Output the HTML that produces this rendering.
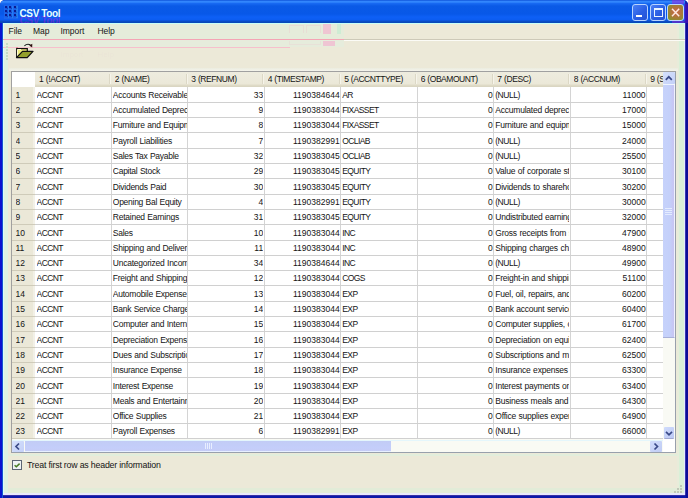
<!DOCTYPE html><html><head><meta charset="utf-8"><style>
*{margin:0;padding:0;box-sizing:border-box}
html,body{width:688px;height:498px;overflow:hidden;background:#ffffff}
body{position:relative;font-family:"Liberation Sans",sans-serif;font-size:8px;color:#141414}
.a{position:absolute}
#win{position:absolute;left:0;top:0;width:688px;height:498px;background:#0a18a8;border-radius:5px 5px 0 0;overflow:hidden}
#title{position:absolute;left:0;top:0;width:688px;height:23px;
 background:linear-gradient(#0a4cd0 0px,#2a7cfa 1px,#3a90ff 2px,#1a6cf4 3px,#0a5ae6 6px,#0858e8 14px,#0e60f6 17px,#0c5cf0 20px,#0a4ec8 21px,#0846b4 23px);}
#ttext{position:absolute;left:19.5px;top:7.6px;line-height:11px;font-weight:bold;font-size:10px;letter-spacing:-0.38px;color:#e8ffff}
#tghost{position:absolute;left:19.5px;top:14.6px;height:8px;overflow:hidden;line-height:11px;font-weight:bold;font-size:10px;letter-spacing:-0.38px;color:rgba(150,30,220,.55)}
#client{position:absolute;left:3px;top:23px;width:682px;height:472px;background:#ece9d8}
.c{position:absolute;overflow:hidden;white-space:nowrap;line-height:15px;height:15px;font-size:8.5px;letter-spacing:-0.2px;word-spacing:0.4px}
</style></head><body>
<div id="win">
<div id="title"></div>
<div class="a" style="left:4px;top:5px;width:14px;height:14px;background:#1c66ee"></div>
<div class="a" style="left:5.0px;top:6.1px;width:2px;height:2px;background:#0a1c90;box-shadow:0 0 1px 0.5px rgba(10,28,144,.5)"></div>
<div class="a" style="left:9.3px;top:6.1px;width:2px;height:2px;background:#0a1c90;box-shadow:0 0 1px 0.5px rgba(10,28,144,.5)"></div>
<div class="a" style="left:13.6px;top:6.1px;width:2px;height:2px;background:#0a1c90;box-shadow:0 0 1px 0.5px rgba(10,28,144,.5)"></div>
<div class="a" style="left:5.0px;top:10.1px;width:2px;height:2px;background:#0a1c90;box-shadow:0 0 1px 0.5px rgba(10,28,144,.5)"></div>
<div class="a" style="left:9.3px;top:10.1px;width:2px;height:2px;background:#0a1c90;box-shadow:0 0 1px 0.5px rgba(10,28,144,.5)"></div>
<div class="a" style="left:13.6px;top:10.1px;width:2px;height:2px;background:#0a1c90;box-shadow:0 0 1px 0.5px rgba(10,28,144,.5)"></div>
<div class="a" style="left:5.0px;top:14.1px;width:2px;height:2px;background:#0a1c90;box-shadow:0 0 1px 0.5px rgba(10,28,144,.5)"></div>
<div class="a" style="left:9.3px;top:14.1px;width:2px;height:2px;background:#0a1c90;box-shadow:0 0 1px 0.5px rgba(10,28,144,.5)"></div>
<div class="a" style="left:13.6px;top:14.1px;width:2px;height:2px;background:#0a1c90;box-shadow:0 0 1px 0.5px rgba(10,28,144,.5)"></div>
<div class="a" style="left:7.5px;top:6px;width:1.5px;height:12px;background:rgba(60,200,255,.25)"></div>
<div class="a" style="left:11.75px;top:6px;width:1.5px;height:12px;background:rgba(60,200,255,.25)"></div>
<div class="a" style="left:16.0px;top:6px;width:1.5px;height:12px;background:rgba(60,200,255,.25)"></div>
<div id="tghost"><div style="margin-top:0px">CSV Tool</div></div>
<div id="ttext">CSV Tool</div>
<div class="a" style="left:632px;top:4px;width:16px;height:17px;border:1px solid #b8d4ff;border-radius:3px;background:linear-gradient(135deg,#4a80f4,#2a5ee4 55%,#2552d4)"><div class="a" style="left:3px;top:10px;width:6px;height:2px;background:#fff"></div></div>
<div class="a" style="left:650px;top:4px;width:16px;height:17px;border:1px solid #b8d4ff;border-radius:3px;background:linear-gradient(135deg,#4a80f4,#2a5ee4 55%,#2552d4)"><div class="a" style="left:2.5px;top:3px;width:9px;height:9px;border:1px solid #e8f4ff;border-top-width:2.5px"></div></div>
<div class="a" style="left:667px;top:4px;width:17px;height:17px;border:1px solid #c0d8ff;border-radius:3px;background:radial-gradient(circle at 55% 45%,#c86a48 0px,#b87040 4px,#a08034 7px,#7a9a30 11px)"><svg width="15" height="15" style="position:absolute;left:0;top:0"><path d="M4 3.8 L11.2 11.2 M11.2 3.8 L4 11.2" stroke="#ffe8e0" stroke-width="1.5"/></svg></div>
<div class="a" style="left:685px;top:0px;width:3px;height:23px;background:linear-gradient(90deg,#1a2ab8,#101098)"></div>
<div class="a" style="left:672px;top:0px;width:12px;height:4px;background:rgba(170,30,220,.45)"></div>
<div class="a" style="left:672px;top:21px;width:12px;height:2px;background:rgba(170,30,220,.45)"></div>
<div class="a" style="left:684px;top:4px;width:4px;height:19px;background:rgba(120,0,200,.35)"></div>
<div id="client"></div>
<div class="a" style="left:0;top:23px;width:2px;height:475px;background:#0812d0"></div>
<div class="a" style="left:2px;top:23px;width:1px;height:475px;background:#1256d0"></div>
<div class="a" style="left:685px;top:23px;width:1px;height:472px;background:#3838b0"></div>
<div class="a" style="left:686px;top:23px;width:2px;height:475px;background:#0c0c98"></div>
<div class="a" style="left:3px;top:495px;width:682px;height:1px;background:#3830a8"></div>
<div class="a" style="left:3px;top:496px;width:683px;height:2px;background:#0a18a8"></div>
<div class="a" style="left:3px;top:23px;width:1px;height:472px;background:#d8fcf8"></div>
<div class="a" style="left:4px;top:24px;width:4px;height:471px;background:#dcf2e2"></div>
<div class="a" style="left:677px;top:23px;width:2px;height:472px;background:#e8ecda"></div>
<div class="a" style="left:679px;top:23px;width:5px;height:472px;background:#daf0d8"></div>
<div class="a" style="left:684px;top:23px;width:1px;height:472px;background:#e4ecfc"></div>
<div class="a" style="left:8px;top:488px;width:675px;height:5px;background:#e2ecd8"></div>
<div class="a" style="left:4px;top:493px;width:681px;height:2px;background:#e8e8fc"></div>
<div class="a" style="left:3px;top:23px;width:682px;height:1px;background:#c8fff8"></div>
<div class="a" style="left:4px;top:24px;width:340px;height:15px;background:#e5ecda"></div>
<div class="a" style="left:4px;top:40px;width:340px;height:7px;background:#e6ecdc"></div>
<div class="a" style="left:8.5px;top:27px;line-height:9px;font-size:8.5px;letter-spacing:-0.05px">File</div>
<div class="a" style="left:33px;top:27px;line-height:9px;font-size:8.5px;letter-spacing:-0.05px">Map</div>
<div class="a" style="left:60.5px;top:27px;line-height:9px;font-size:8.5px;letter-spacing:-0.05px">Import</div>
<div class="a" style="left:97.4px;top:27px;line-height:9px;font-size:8.5px;letter-spacing:-0.05px">Help</div>
<div class="a" style="left:344px;top:39px;width:341px;height:1px;background:#cdc9b8"></div>
<div class="a" style="left:344px;top:40px;width:341px;height:1px;background:#fbfbf6"></div>
<div class="a" style="left:3px;top:39px;width:341px;height:1px;background:#f4a4b4"></div>
<div class="a" style="left:3px;top:47px;width:287px;height:1px;background:#f6c0cc"></div>
<div class="a" style="left:289px;top:25px;width:15px;height:8px;border:1px solid rgba(250,150,190,.15);border-bottom:none"></div>
<div class="a" style="left:306px;top:25px;width:15px;height:8px;border:1px solid rgba(250,150,190,.15);border-bottom:none"></div>
<div class="a" style="left:323px;top:24px;width:8px;height:10px;background:rgba(250,150,200,.45)"></div>
<div class="a" style="left:337px;top:24px;width:4px;height:10px;background:rgba(120,240,190,.2)"></div>
<div class="a" style="left:323px;top:41px;width:12px;height:5px;background:rgba(250,150,200,.45)"></div>
<div class="a" style="left:289px;top:41px;width:32px;height:4px;border:1px solid rgba(250,150,190,.12);border-top:none"></div>
<div class="a" style="left:60.5px;top:50.4px;line-height:9px;color:rgba(235,150,185,.08)">Import</div>
<div class="a" style="left:97.4px;top:50.4px;line-height:9px;color:rgba(235,150,185,.08)">Help</div>
<div class="a" style="left:6px;top:43px;width:2px;height:2px;background:#c4dcc4"></div>
<div class="a" style="left:6px;top:46px;width:2px;height:2px;background:#c4dcc4"></div>
<div class="a" style="left:6px;top:49px;width:2px;height:2px;background:#c4dcc4"></div>
<div class="a" style="left:6px;top:52px;width:2px;height:2px;background:#c4dcc4"></div>
<div class="a" style="left:6px;top:55px;width:2px;height:2px;background:#c4dcc4"></div>
<div class="a" style="left:6px;top:58px;width:2px;height:2px;background:#c4dcc4"></div>
<svg class="a" style="left:12px;top:40px" width="24" height="22" viewBox="0 0 24 22">
<path d="M4.7 17.5 V8.7 H15.3 V11.8" fill="#eeec7c" stroke="#111" stroke-width="1.2"/>
<path d="M5.5 16 V9.5 H9" fill="none" stroke="#fbfbd0" stroke-width="1"/>
<path d="M4.5 17.6 L10.5 11.4 L21 11.4 L15.2 17.6 Z" fill="#94a02c" stroke="#111" stroke-width="1.3" stroke-linejoin="round"/>
<path d="M12.4 5.8 Q15.2 3.2 18.4 4.8" fill="none" stroke="#1a1a1a" stroke-width="1.1"/>
<path d="M17.2 5.6 L20.3 3.8 L20.2 7.6 Z" fill="#301010"/>
<path d="M4 7.5 h2" stroke="#e06070" stroke-width="1" opacity=".5"/>
</svg>
<div class="a" style="left:9px;top:68px;width:669px;height:3px;background:linear-gradient(#ebecdf,#f4f4ec)"></div>
<div class="a" style="left:11px;top:71px;width:665px;height:382px;border:1px solid;border-color:#a0a0a0 #98a0ac #98a0ac #a0a0a0;background:#fff"></div>
<div class="a" style="left:35px;top:72px;width:628px;height:15px;background:linear-gradient(#eeecdf 0px,#ebe8d8 12px,#e0dcc8 13px,#d8d4c0 15px)"></div>
<div class="a" style="left:12px;top:87px;width:23px;height:352px;background:linear-gradient(90deg,#ebe8d8 0,#ebe8d8 21px,#f2f0e6 21px)"></div>
<div class="c" style="left:39.0px;top:72.4px;width:71.8px;letter-spacing:-0.38px">1 (!ACCNT)</div>
<div class="c" style="left:114.8px;top:72.4px;width:72.49px;letter-spacing:-0.375px">2 (NAME)</div>
<div class="a" style="left:109.1px;top:74px;width:1px;height:10px;background:#dcd8c6"></div>
<div class="a" style="left:110.1px;top:74px;width:1px;height:10px;background:#f6f4ea"></div>
<div class="c" style="left:191.29px;top:72.4px;width:72.48999999999998px;letter-spacing:-0.42px">3 (REFNUM)</div>
<div class="a" style="left:185.59px;top:74px;width:1px;height:10px;background:#dcd8c6"></div>
<div class="a" style="left:186.59px;top:74px;width:1px;height:10px;background:#f6f4ea"></div>
<div class="c" style="left:267.78px;top:72.4px;width:72.49000000000001px;letter-spacing:-0.462px">4 (TIMESTAMP)</div>
<div class="a" style="left:262.08px;top:74px;width:1px;height:10px;background:#dcd8c6"></div>
<div class="a" style="left:263.08px;top:74px;width:1px;height:10px;background:#f6f4ea"></div>
<div class="c" style="left:344.27px;top:72.4px;width:72.49000000000001px;letter-spacing:-0.462px">5 (ACCNTTYPE)</div>
<div class="a" style="left:338.57px;top:74px;width:1px;height:10px;background:#dcd8c6"></div>
<div class="a" style="left:339.57px;top:74px;width:1px;height:10px;background:#f6f4ea"></div>
<div class="c" style="left:420.76px;top:72.4px;width:72.49000000000001px;letter-spacing:-0.45px">6 (OBAMOUNT)</div>
<div class="a" style="left:415.06px;top:74px;width:1px;height:10px;background:#dcd8c6"></div>
<div class="a" style="left:416.06px;top:74px;width:1px;height:10px;background:#f6f4ea"></div>
<div class="c" style="left:497.25px;top:72.4px;width:72.4899999999999px;letter-spacing:-0.375px">7 (DESC)</div>
<div class="a" style="left:491.55px;top:74px;width:1px;height:10px;background:#dcd8c6"></div>
<div class="a" style="left:492.55px;top:74px;width:1px;height:10px;background:#f6f4ea"></div>
<div class="c" style="left:573.7399999999999px;top:72.4px;width:72.49000000000001px;letter-spacing:-0.42px">8 (ACCNUM)</div>
<div class="a" style="left:568.0399999999998px;top:74px;width:1px;height:10px;background:#dcd8c6"></div>
<div class="a" style="left:569.0399999999998px;top:74px;width:1px;height:10px;background:#f6f4ea"></div>
<div class="c" style="left:650.2299999999999px;top:72.4px;width:12.770000000000095px;letter-spacing:-0.45px">9 (SALESTAX)</div>
<div class="a" style="left:644.5299999999999px;top:74px;width:1px;height:10px;background:#dcd8c6"></div>
<div class="a" style="left:645.5299999999999px;top:74px;width:1px;height:10px;background:#f6f4ea"></div>
<div class="a" style="left:110.80px;top:87px;width:1px;height:352px;background:#d4d4d4"></div>
<div class="a" style="left:187.29px;top:87px;width:1px;height:352px;background:#d4d4d4"></div>
<div class="a" style="left:263.78px;top:87px;width:1px;height:352px;background:#d4d4d4"></div>
<div class="a" style="left:340.27px;top:87px;width:1px;height:352px;background:#d4d4d4"></div>
<div class="a" style="left:416.76px;top:87px;width:1px;height:352px;background:#d4d4d4"></div>
<div class="a" style="left:493.25px;top:87px;width:1px;height:352px;background:#d4d4d4"></div>
<div class="a" style="left:569.74px;top:87px;width:1px;height:352px;background:#d4d4d4"></div>
<div class="a" style="left:646.23px;top:87px;width:1px;height:352px;background:#d4d4d4"></div>
<div class="a" style="left:12px;top:101.80px;width:23px;height:1px;background:#cfcbb9"></div>
<div class="a" style="left:35px;top:101.80px;width:628px;height:1px;background:#d0d0d0"></div>
<div class="c" style="left:15.5px;top:88.33px;width:18px;letter-spacing:0">1</div>
<div class="c" style="left:36.60px;top:88.33px;width:73.30px;letter-spacing:-0.6px">ACCNT</div>
<div class="c" style="left:112.80px;top:88.33px;width:73.99px;letter-spacing:-0.242px">Accounts Receivable</div>
<div class="c" style="left:188.29px;top:88.33px;width:74.89px;text-align:right;letter-spacing:0.0px">33</div>
<div class="c" style="left:264.78px;top:88.33px;width:74.89px;text-align:right;letter-spacing:0.0px">1190384644</div>
<div class="c" style="left:342.27px;top:88.33px;width:73.99px;letter-spacing:-0.6px">AR</div>
<div class="c" style="left:417.76px;top:88.33px;width:74.89px;text-align:right;letter-spacing:0.0px">0</div>
<div class="c" style="left:495.25px;top:88.33px;width:73.99px;letter-spacing:-0.467px">(NULL)</div>
<div class="c" style="left:570.74px;top:88.33px;width:74.89px;text-align:right;letter-spacing:0.0px">11000</div>
<div class="a" style="left:12px;top:117.10px;width:23px;height:1px;background:#cfcbb9"></div>
<div class="a" style="left:35px;top:117.10px;width:628px;height:1px;background:#d0d0d0"></div>
<div class="c" style="left:15.5px;top:103.13px;width:18px;letter-spacing:0">2</div>
<div class="c" style="left:36.60px;top:103.13px;width:73.30px;letter-spacing:-0.6px">ACCNT</div>
<div class="c" style="left:112.80px;top:103.13px;width:73.99px;letter-spacing:-0.233px">Accumulated Depreciation</div>
<div class="c" style="left:188.29px;top:103.13px;width:74.89px;text-align:right;letter-spacing:0.0px">9</div>
<div class="c" style="left:264.78px;top:103.13px;width:74.89px;text-align:right;letter-spacing:0.0px">1190383044</div>
<div class="c" style="left:342.27px;top:103.13px;width:73.99px;letter-spacing:-0.6px">FIXASSET</div>
<div class="c" style="left:417.76px;top:103.13px;width:74.89px;text-align:right;letter-spacing:0.0px">0</div>
<div class="c" style="left:495.25px;top:103.13px;width:73.99px;letter-spacing:-0.217px">Accumulated depreciation</div>
<div class="c" style="left:570.74px;top:103.13px;width:74.89px;text-align:right;letter-spacing:0.0px">17000</div>
<div class="a" style="left:12px;top:132.40px;width:23px;height:1px;background:#cfcbb9"></div>
<div class="a" style="left:35px;top:132.40px;width:628px;height:1px;background:#d0d0d0"></div>
<div class="c" style="left:15.5px;top:118.43px;width:18px;letter-spacing:0">3</div>
<div class="c" style="left:36.60px;top:118.43px;width:73.30px;letter-spacing:-0.6px">ACCNT</div>
<div class="c" style="left:112.80px;top:118.43px;width:73.99px;letter-spacing:-0.235px">Furniture and Equipment</div>
<div class="c" style="left:188.29px;top:118.43px;width:74.89px;text-align:right;letter-spacing:0.0px">8</div>
<div class="c" style="left:264.78px;top:118.43px;width:74.89px;text-align:right;letter-spacing:0.0px">1190383044</div>
<div class="c" style="left:342.27px;top:118.43px;width:73.99px;letter-spacing:-0.6px">FIXASSET</div>
<div class="c" style="left:417.76px;top:118.43px;width:74.89px;text-align:right;letter-spacing:0.0px">0</div>
<div class="c" style="left:495.25px;top:118.43px;width:73.99px;letter-spacing:-0.217px">Furniture and equipment</div>
<div class="c" style="left:570.74px;top:118.43px;width:74.89px;text-align:right;letter-spacing:0.0px">15000</div>
<div class="a" style="left:12px;top:147.70px;width:23px;height:1px;background:#cfcbb9"></div>
<div class="a" style="left:35px;top:147.70px;width:628px;height:1px;background:#d0d0d0"></div>
<div class="c" style="left:15.5px;top:133.73px;width:18px;letter-spacing:0">4</div>
<div class="c" style="left:36.60px;top:133.73px;width:73.30px;letter-spacing:-0.6px">ACCNT</div>
<div class="c" style="left:112.80px;top:133.73px;width:73.99px;letter-spacing:-0.242px">Payroll Liabilities</div>
<div class="c" style="left:188.29px;top:133.73px;width:74.89px;text-align:right;letter-spacing:0.0px">7</div>
<div class="c" style="left:264.78px;top:133.73px;width:74.89px;text-align:right;letter-spacing:0.0px">1190382991</div>
<div class="c" style="left:342.27px;top:133.73px;width:73.99px;letter-spacing:-0.6px">OCLIAB</div>
<div class="c" style="left:417.76px;top:133.73px;width:74.89px;text-align:right;letter-spacing:0.0px">0</div>
<div class="c" style="left:495.25px;top:133.73px;width:73.99px;letter-spacing:-0.467px">(NULL)</div>
<div class="c" style="left:570.74px;top:133.73px;width:74.89px;text-align:right;letter-spacing:0.0px">24000</div>
<div class="a" style="left:12px;top:163.00px;width:23px;height:1px;background:#cfcbb9"></div>
<div class="a" style="left:35px;top:163.00px;width:628px;height:1px;background:#d0d0d0"></div>
<div class="c" style="left:15.5px;top:149.03px;width:18px;letter-spacing:0">5</div>
<div class="c" style="left:36.60px;top:149.03px;width:73.30px;letter-spacing:-0.6px">ACCNT</div>
<div class="c" style="left:112.80px;top:149.03px;width:73.99px;letter-spacing:-0.271px">Sales Tax Payable</div>
<div class="c" style="left:188.29px;top:149.03px;width:74.89px;text-align:right;letter-spacing:0.0px">32</div>
<div class="c" style="left:264.78px;top:149.03px;width:74.89px;text-align:right;letter-spacing:0.0px">1190383045</div>
<div class="c" style="left:342.27px;top:149.03px;width:73.99px;letter-spacing:-0.6px">OCLIAB</div>
<div class="c" style="left:417.76px;top:149.03px;width:74.89px;text-align:right;letter-spacing:0.0px">0</div>
<div class="c" style="left:495.25px;top:149.03px;width:73.99px;letter-spacing:-0.467px">(NULL)</div>
<div class="c" style="left:570.74px;top:149.03px;width:74.89px;text-align:right;letter-spacing:0.0px">25500</div>
<div class="a" style="left:12px;top:178.30px;width:23px;height:1px;background:#cfcbb9"></div>
<div class="a" style="left:35px;top:178.30px;width:628px;height:1px;background:#d0d0d0"></div>
<div class="c" style="left:15.5px;top:164.33px;width:18px;letter-spacing:0">6</div>
<div class="c" style="left:36.60px;top:164.33px;width:73.30px;letter-spacing:-0.6px">ACCNT</div>
<div class="c" style="left:112.80px;top:164.33px;width:73.99px;letter-spacing:-0.262px">Capital Stock</div>
<div class="c" style="left:188.29px;top:164.33px;width:74.89px;text-align:right;letter-spacing:0.0px">29</div>
<div class="c" style="left:264.78px;top:164.33px;width:74.89px;text-align:right;letter-spacing:0.0px">1190383045</div>
<div class="c" style="left:342.27px;top:164.33px;width:73.99px;letter-spacing:-0.6px">EQUITY</div>
<div class="c" style="left:417.76px;top:164.33px;width:74.89px;text-align:right;letter-spacing:0.0px">0</div>
<div class="c" style="left:495.25px;top:164.33px;width:73.99px;letter-spacing:-0.217px">Value of corporate stock</div>
<div class="c" style="left:570.74px;top:164.33px;width:74.89px;text-align:right;letter-spacing:0.0px">30100</div>
<div class="a" style="left:12px;top:193.60px;width:23px;height:1px;background:#cfcbb9"></div>
<div class="a" style="left:35px;top:193.60px;width:628px;height:1px;background:#d0d0d0"></div>
<div class="c" style="left:15.5px;top:179.63px;width:18px;letter-spacing:0">7</div>
<div class="c" style="left:36.60px;top:179.63px;width:73.30px;letter-spacing:-0.6px">ACCNT</div>
<div class="c" style="left:112.80px;top:179.63px;width:73.99px;letter-spacing:-0.257px">Dividends Paid</div>
<div class="c" style="left:188.29px;top:179.63px;width:74.89px;text-align:right;letter-spacing:0.0px">30</div>
<div class="c" style="left:264.78px;top:179.63px;width:74.89px;text-align:right;letter-spacing:0.0px">1190383045</div>
<div class="c" style="left:342.27px;top:179.63px;width:73.99px;letter-spacing:-0.6px">EQUITY</div>
<div class="c" style="left:417.76px;top:179.63px;width:74.89px;text-align:right;letter-spacing:0.0px">0</div>
<div class="c" style="left:495.25px;top:179.63px;width:73.99px;letter-spacing:-0.216px">Dividends to shareholders</div>
<div class="c" style="left:570.74px;top:179.63px;width:74.89px;text-align:right;letter-spacing:0.0px">30200</div>
<div class="a" style="left:12px;top:208.90px;width:23px;height:1px;background:#cfcbb9"></div>
<div class="a" style="left:35px;top:208.90px;width:628px;height:1px;background:#d0d0d0"></div>
<div class="c" style="left:15.5px;top:194.93px;width:18px;letter-spacing:0">8</div>
<div class="c" style="left:36.60px;top:194.93px;width:73.30px;letter-spacing:-0.6px">ACCNT</div>
<div class="c" style="left:112.80px;top:194.93px;width:73.99px;letter-spacing:-0.267px">Opening Bal Equity</div>
<div class="c" style="left:188.29px;top:194.93px;width:74.89px;text-align:right;letter-spacing:0.0px">4</div>
<div class="c" style="left:264.78px;top:194.93px;width:74.89px;text-align:right;letter-spacing:0.0px">1190382991</div>
<div class="c" style="left:342.27px;top:194.93px;width:73.99px;letter-spacing:-0.6px">EQUITY</div>
<div class="c" style="left:417.76px;top:194.93px;width:74.89px;text-align:right;letter-spacing:0.0px">0</div>
<div class="c" style="left:495.25px;top:194.93px;width:73.99px;letter-spacing:-0.467px">(NULL)</div>
<div class="c" style="left:570.74px;top:194.93px;width:74.89px;text-align:right;letter-spacing:0.0px">30000</div>
<div class="a" style="left:12px;top:224.20px;width:23px;height:1px;background:#cfcbb9"></div>
<div class="a" style="left:35px;top:224.20px;width:628px;height:1px;background:#d0d0d0"></div>
<div class="c" style="left:15.5px;top:210.23px;width:18px;letter-spacing:0">9</div>
<div class="c" style="left:36.60px;top:210.23px;width:73.30px;letter-spacing:-0.6px">ACCNT</div>
<div class="c" style="left:112.80px;top:210.23px;width:73.99px;letter-spacing:-0.247px">Retained Earnings</div>
<div class="c" style="left:188.29px;top:210.23px;width:74.89px;text-align:right;letter-spacing:0.0px">31</div>
<div class="c" style="left:264.78px;top:210.23px;width:74.89px;text-align:right;letter-spacing:0.0px">1190383045</div>
<div class="c" style="left:342.27px;top:210.23px;width:73.99px;letter-spacing:-0.6px">EQUITY</div>
<div class="c" style="left:417.76px;top:210.23px;width:74.89px;text-align:right;letter-spacing:0.0px">0</div>
<div class="c" style="left:495.25px;top:210.23px;width:73.99px;letter-spacing:-0.218px">Undistributed earnings</div>
<div class="c" style="left:570.74px;top:210.23px;width:74.89px;text-align:right;letter-spacing:0.0px">32000</div>
<div class="a" style="left:12px;top:239.50px;width:23px;height:1px;background:#cfcbb9"></div>
<div class="a" style="left:35px;top:239.50px;width:628px;height:1px;background:#d0d0d0"></div>
<div class="c" style="left:15.5px;top:225.53px;width:18px;letter-spacing:0">10</div>
<div class="c" style="left:36.60px;top:225.53px;width:73.30px;letter-spacing:-0.6px">ACCNT</div>
<div class="c" style="left:112.80px;top:225.53px;width:73.99px;letter-spacing:-0.28px">Sales</div>
<div class="c" style="left:188.29px;top:225.53px;width:74.89px;text-align:right;letter-spacing:0.0px">10</div>
<div class="c" style="left:264.78px;top:225.53px;width:74.89px;text-align:right;letter-spacing:0.0px">1190383044</div>
<div class="c" style="left:342.27px;top:225.53px;width:73.99px;letter-spacing:-0.6px">INC</div>
<div class="c" style="left:417.76px;top:225.53px;width:74.89px;text-align:right;letter-spacing:0.0px">0</div>
<div class="c" style="left:495.25px;top:225.53px;width:73.99px;letter-spacing:-0.216px">Gross receipts from sales</div>
<div class="c" style="left:570.74px;top:225.53px;width:74.89px;text-align:right;letter-spacing:0.0px">47900</div>
<div class="a" style="left:12px;top:254.80px;width:23px;height:1px;background:#cfcbb9"></div>
<div class="a" style="left:35px;top:254.80px;width:628px;height:1px;background:#d0d0d0"></div>
<div class="c" style="left:15.5px;top:240.83px;width:18px;letter-spacing:0">11</div>
<div class="c" style="left:36.60px;top:240.83px;width:73.30px;letter-spacing:-0.6px">ACCNT</div>
<div class="c" style="left:112.80px;top:240.83px;width:73.99px;letter-spacing:-0.243px">Shipping and Delivery Income</div>
<div class="c" style="left:188.29px;top:240.83px;width:74.89px;text-align:right;letter-spacing:0.0px">11</div>
<div class="c" style="left:264.78px;top:240.83px;width:74.89px;text-align:right;letter-spacing:0.0px">1190383044</div>
<div class="c" style="left:342.27px;top:240.83px;width:73.99px;letter-spacing:-0.6px">INC</div>
<div class="c" style="left:417.76px;top:240.83px;width:74.89px;text-align:right;letter-spacing:0.0px">0</div>
<div class="c" style="left:495.25px;top:240.83px;width:73.99px;letter-spacing:-0.217px">Shipping charges charged</div>
<div class="c" style="left:570.74px;top:240.83px;width:74.89px;text-align:right;letter-spacing:0.0px">48900</div>
<div class="a" style="left:12px;top:270.10px;width:23px;height:1px;background:#cfcbb9"></div>
<div class="a" style="left:35px;top:270.10px;width:628px;height:1px;background:#d0d0d0"></div>
<div class="c" style="left:15.5px;top:256.13px;width:18px;letter-spacing:0">12</div>
<div class="c" style="left:36.60px;top:256.13px;width:73.30px;letter-spacing:-0.6px">ACCNT</div>
<div class="c" style="left:112.80px;top:256.13px;width:73.99px;letter-spacing:-0.24px">Uncategorized Income</div>
<div class="c" style="left:188.29px;top:256.13px;width:74.89px;text-align:right;letter-spacing:0.0px">34</div>
<div class="c" style="left:264.78px;top:256.13px;width:74.89px;text-align:right;letter-spacing:0.0px">1190384644</div>
<div class="c" style="left:342.27px;top:256.13px;width:73.99px;letter-spacing:-0.6px">INC</div>
<div class="c" style="left:417.76px;top:256.13px;width:74.89px;text-align:right;letter-spacing:0.0px">0</div>
<div class="c" style="left:495.25px;top:256.13px;width:73.99px;letter-spacing:-0.467px">(NULL)</div>
<div class="c" style="left:570.74px;top:256.13px;width:74.89px;text-align:right;letter-spacing:0.0px">49900</div>
<div class="a" style="left:12px;top:285.40px;width:23px;height:1px;background:#cfcbb9"></div>
<div class="a" style="left:35px;top:285.40px;width:628px;height:1px;background:#d0d0d0"></div>
<div class="c" style="left:15.5px;top:271.43px;width:18px;letter-spacing:0">13</div>
<div class="c" style="left:36.60px;top:271.43px;width:73.30px;letter-spacing:-0.6px">ACCNT</div>
<div class="c" style="left:112.80px;top:271.43px;width:73.99px;letter-spacing:-0.246px">Freight and Shipping Costs</div>
<div class="c" style="left:188.29px;top:271.43px;width:74.89px;text-align:right;letter-spacing:0.0px">12</div>
<div class="c" style="left:264.78px;top:271.43px;width:74.89px;text-align:right;letter-spacing:0.0px">1190383044</div>
<div class="c" style="left:342.27px;top:271.43px;width:73.99px;letter-spacing:-0.6px">COGS</div>
<div class="c" style="left:417.76px;top:271.43px;width:74.89px;text-align:right;letter-spacing:0.0px">0</div>
<div class="c" style="left:495.25px;top:271.43px;width:73.99px;letter-spacing:-0.217px">Freight-in and shipping</div>
<div class="c" style="left:570.74px;top:271.43px;width:74.89px;text-align:right;letter-spacing:0.0px">51100</div>
<div class="a" style="left:12px;top:300.70px;width:23px;height:1px;background:#cfcbb9"></div>
<div class="a" style="left:35px;top:300.70px;width:628px;height:1px;background:#d0d0d0"></div>
<div class="c" style="left:15.5px;top:286.73px;width:18px;letter-spacing:0">14</div>
<div class="c" style="left:36.60px;top:286.73px;width:73.30px;letter-spacing:-0.6px">ACCNT</div>
<div class="c" style="left:112.80px;top:286.73px;width:73.99px;letter-spacing:-0.244px">Automobile Expense</div>
<div class="c" style="left:188.29px;top:286.73px;width:74.89px;text-align:right;letter-spacing:0.0px">13</div>
<div class="c" style="left:264.78px;top:286.73px;width:74.89px;text-align:right;letter-spacing:0.0px">1190383044</div>
<div class="c" style="left:342.27px;top:286.73px;width:73.99px;letter-spacing:-0.6px">EXP</div>
<div class="c" style="left:417.76px;top:286.73px;width:74.89px;text-align:right;letter-spacing:0.0px">0</div>
<div class="c" style="left:495.25px;top:286.73px;width:73.99px;letter-spacing:-0.217px">Fuel, oil, repairs, and</div>
<div class="c" style="left:570.74px;top:286.73px;width:74.89px;text-align:right;letter-spacing:0.0px">60200</div>
<div class="a" style="left:12px;top:316.00px;width:23px;height:1px;background:#cfcbb9"></div>
<div class="a" style="left:35px;top:316.00px;width:628px;height:1px;background:#d0d0d0"></div>
<div class="c" style="left:15.5px;top:302.03px;width:18px;letter-spacing:0">15</div>
<div class="c" style="left:36.60px;top:302.03px;width:73.30px;letter-spacing:-0.6px">ACCNT</div>
<div class="c" style="left:112.80px;top:302.03px;width:73.99px;letter-spacing:-0.26px">Bank Service Charges</div>
<div class="c" style="left:188.29px;top:302.03px;width:74.89px;text-align:right;letter-spacing:0.0px">14</div>
<div class="c" style="left:264.78px;top:302.03px;width:74.89px;text-align:right;letter-spacing:0.0px">1190383044</div>
<div class="c" style="left:342.27px;top:302.03px;width:73.99px;letter-spacing:-0.6px">EXP</div>
<div class="c" style="left:417.76px;top:302.03px;width:74.89px;text-align:right;letter-spacing:0.0px">0</div>
<div class="c" style="left:495.25px;top:302.03px;width:73.99px;letter-spacing:-0.22px">Bank account service</div>
<div class="c" style="left:570.74px;top:302.03px;width:74.89px;text-align:right;letter-spacing:0.0px">60400</div>
<div class="a" style="left:12px;top:331.30px;width:23px;height:1px;background:#cfcbb9"></div>
<div class="a" style="left:35px;top:331.30px;width:628px;height:1px;background:#d0d0d0"></div>
<div class="c" style="left:15.5px;top:317.33px;width:18px;letter-spacing:0">16</div>
<div class="c" style="left:36.60px;top:317.33px;width:73.30px;letter-spacing:-0.6px">ACCNT</div>
<div class="c" style="left:112.80px;top:317.33px;width:73.99px;letter-spacing:-0.238px">Computer and Internet</div>
<div class="c" style="left:188.29px;top:317.33px;width:74.89px;text-align:right;letter-spacing:0.0px">15</div>
<div class="c" style="left:264.78px;top:317.33px;width:74.89px;text-align:right;letter-spacing:0.0px">1190383044</div>
<div class="c" style="left:342.27px;top:317.33px;width:73.99px;letter-spacing:-0.6px">EXP</div>
<div class="c" style="left:417.76px;top:317.33px;width:74.89px;text-align:right;letter-spacing:0.0px">0</div>
<div class="c" style="left:495.25px;top:317.33px;width:73.99px;letter-spacing:-0.218px">Computer supplies, off</div>
<div class="c" style="left:570.74px;top:317.33px;width:74.89px;text-align:right;letter-spacing:0.0px">61700</div>
<div class="a" style="left:12px;top:346.60px;width:23px;height:1px;background:#cfcbb9"></div>
<div class="a" style="left:35px;top:346.60px;width:628px;height:1px;background:#d0d0d0"></div>
<div class="c" style="left:15.5px;top:332.63px;width:18px;letter-spacing:0">17</div>
<div class="c" style="left:36.60px;top:332.63px;width:73.30px;letter-spacing:-0.6px">ACCNT</div>
<div class="c" style="left:112.80px;top:332.63px;width:73.99px;letter-spacing:-0.24px">Depreciation Expense</div>
<div class="c" style="left:188.29px;top:332.63px;width:74.89px;text-align:right;letter-spacing:0.0px">16</div>
<div class="c" style="left:264.78px;top:332.63px;width:74.89px;text-align:right;letter-spacing:0.0px">1190383044</div>
<div class="c" style="left:342.27px;top:332.63px;width:73.99px;letter-spacing:-0.6px">EXP</div>
<div class="c" style="left:417.76px;top:332.63px;width:74.89px;text-align:right;letter-spacing:0.0px">0</div>
<div class="c" style="left:495.25px;top:332.63px;width:73.99px;letter-spacing:-0.216px">Depreciation on equipment</div>
<div class="c" style="left:570.74px;top:332.63px;width:74.89px;text-align:right;letter-spacing:0.0px">62400</div>
<div class="a" style="left:12px;top:361.90px;width:23px;height:1px;background:#cfcbb9"></div>
<div class="a" style="left:35px;top:361.90px;width:628px;height:1px;background:#d0d0d0"></div>
<div class="c" style="left:15.5px;top:347.93px;width:18px;letter-spacing:0">18</div>
<div class="c" style="left:36.60px;top:347.93px;width:73.30px;letter-spacing:-0.6px">ACCNT</div>
<div class="c" style="left:112.80px;top:347.93px;width:73.99px;letter-spacing:-0.236px">Dues and Subscriptions</div>
<div class="c" style="left:188.29px;top:347.93px;width:74.89px;text-align:right;letter-spacing:0.0px">17</div>
<div class="c" style="left:264.78px;top:347.93px;width:74.89px;text-align:right;letter-spacing:0.0px">1190383044</div>
<div class="c" style="left:342.27px;top:347.93px;width:73.99px;letter-spacing:-0.6px">EXP</div>
<div class="c" style="left:417.76px;top:347.93px;width:74.89px;text-align:right;letter-spacing:0.0px">0</div>
<div class="c" style="left:495.25px;top:347.93px;width:73.99px;letter-spacing:-0.214px">Subscriptions and memberships</div>
<div class="c" style="left:570.74px;top:347.93px;width:74.89px;text-align:right;letter-spacing:0.0px">62500</div>
<div class="a" style="left:12px;top:377.20px;width:23px;height:1px;background:#cfcbb9"></div>
<div class="a" style="left:35px;top:377.20px;width:628px;height:1px;background:#d0d0d0"></div>
<div class="c" style="left:15.5px;top:363.23px;width:18px;letter-spacing:0">19</div>
<div class="c" style="left:36.60px;top:363.23px;width:73.30px;letter-spacing:-0.6px">ACCNT</div>
<div class="c" style="left:112.80px;top:363.23px;width:73.99px;letter-spacing:-0.247px">Insurance Expense</div>
<div class="c" style="left:188.29px;top:363.23px;width:74.89px;text-align:right;letter-spacing:0.0px">18</div>
<div class="c" style="left:264.78px;top:363.23px;width:74.89px;text-align:right;letter-spacing:0.0px">1190383044</div>
<div class="c" style="left:342.27px;top:363.23px;width:73.99px;letter-spacing:-0.6px">EXP</div>
<div class="c" style="left:417.76px;top:363.23px;width:74.89px;text-align:right;letter-spacing:0.0px">0</div>
<div class="c" style="left:495.25px;top:363.23px;width:73.99px;letter-spacing:-0.222px">Insurance expenses</div>
<div class="c" style="left:570.74px;top:363.23px;width:74.89px;text-align:right;letter-spacing:0.0px">63300</div>
<div class="a" style="left:12px;top:392.50px;width:23px;height:1px;background:#cfcbb9"></div>
<div class="a" style="left:35px;top:392.50px;width:628px;height:1px;background:#d0d0d0"></div>
<div class="c" style="left:15.5px;top:378.53px;width:18px;letter-spacing:0">20</div>
<div class="c" style="left:36.60px;top:378.53px;width:73.30px;letter-spacing:-0.6px">ACCNT</div>
<div class="c" style="left:112.80px;top:378.53px;width:73.99px;letter-spacing:-0.25px">Interest Expense</div>
<div class="c" style="left:188.29px;top:378.53px;width:74.89px;text-align:right;letter-spacing:0.0px">19</div>
<div class="c" style="left:264.78px;top:378.53px;width:74.89px;text-align:right;letter-spacing:0.0px">1190383044</div>
<div class="c" style="left:342.27px;top:378.53px;width:73.99px;letter-spacing:-0.6px">EXP</div>
<div class="c" style="left:417.76px;top:378.53px;width:74.89px;text-align:right;letter-spacing:0.0px">0</div>
<div class="c" style="left:495.25px;top:378.53px;width:73.99px;letter-spacing:-0.22px">Interest payments on</div>
<div class="c" style="left:570.74px;top:378.53px;width:74.89px;text-align:right;letter-spacing:0.0px">63400</div>
<div class="a" style="left:12px;top:407.80px;width:23px;height:1px;background:#cfcbb9"></div>
<div class="a" style="left:35px;top:407.80px;width:628px;height:1px;background:#d0d0d0"></div>
<div class="c" style="left:15.5px;top:393.83px;width:18px;letter-spacing:0">21</div>
<div class="c" style="left:36.60px;top:393.83px;width:73.30px;letter-spacing:-0.6px">ACCNT</div>
<div class="c" style="left:112.80px;top:393.83px;width:73.99px;letter-spacing:-0.235px">Meals and Entertainment</div>
<div class="c" style="left:188.29px;top:393.83px;width:74.89px;text-align:right;letter-spacing:0.0px">20</div>
<div class="c" style="left:264.78px;top:393.83px;width:74.89px;text-align:right;letter-spacing:0.0px">1190383044</div>
<div class="c" style="left:342.27px;top:393.83px;width:73.99px;letter-spacing:-0.6px">EXP</div>
<div class="c" style="left:417.76px;top:393.83px;width:74.89px;text-align:right;letter-spacing:0.0px">0</div>
<div class="c" style="left:495.25px;top:393.83px;width:73.99px;letter-spacing:-0.218px">Business meals and ent</div>
<div class="c" style="left:570.74px;top:393.83px;width:74.89px;text-align:right;letter-spacing:0.0px">64300</div>
<div class="a" style="left:12px;top:423.10px;width:23px;height:1px;background:#cfcbb9"></div>
<div class="a" style="left:35px;top:423.10px;width:628px;height:1px;background:#d0d0d0"></div>
<div class="c" style="left:15.5px;top:409.13px;width:18px;letter-spacing:0">22</div>
<div class="c" style="left:36.60px;top:409.13px;width:73.30px;letter-spacing:-0.6px">ACCNT</div>
<div class="c" style="left:112.80px;top:409.13px;width:73.99px;letter-spacing:-0.253px">Office Supplies</div>
<div class="c" style="left:188.29px;top:409.13px;width:74.89px;text-align:right;letter-spacing:0.0px">21</div>
<div class="c" style="left:264.78px;top:409.13px;width:74.89px;text-align:right;letter-spacing:0.0px">1190383044</div>
<div class="c" style="left:342.27px;top:409.13px;width:73.99px;letter-spacing:-0.6px">EXP</div>
<div class="c" style="left:417.76px;top:409.13px;width:74.89px;text-align:right;letter-spacing:0.0px">0</div>
<div class="c" style="left:495.25px;top:409.13px;width:73.99px;letter-spacing:-0.217px">Office supplies expense</div>
<div class="c" style="left:570.74px;top:409.13px;width:74.89px;text-align:right;letter-spacing:0.0px">64900</div>
<div class="a" style="left:12px;top:438.40px;width:23px;height:1px;background:#cfcbb9"></div>
<div class="a" style="left:35px;top:438.40px;width:628px;height:1px;background:#d0d0d0"></div>
<div class="c" style="left:15.5px;top:424.43px;width:18px;letter-spacing:0">23</div>
<div class="c" style="left:36.60px;top:424.43px;width:73.30px;letter-spacing:-0.6px">ACCNT</div>
<div class="c" style="left:112.80px;top:424.43px;width:73.99px;letter-spacing:-0.25px">Payroll Expenses</div>
<div class="c" style="left:188.29px;top:424.43px;width:74.89px;text-align:right;letter-spacing:0.0px">6</div>
<div class="c" style="left:264.78px;top:424.43px;width:74.89px;text-align:right;letter-spacing:0.0px">1190382991</div>
<div class="c" style="left:342.27px;top:424.43px;width:73.99px;letter-spacing:-0.6px">EXP</div>
<div class="c" style="left:417.76px;top:424.43px;width:74.89px;text-align:right;letter-spacing:0.0px">0</div>
<div class="c" style="left:495.25px;top:424.43px;width:73.99px;letter-spacing:-0.467px">(NULL)</div>
<div class="c" style="left:570.74px;top:424.43px;width:74.89px;text-align:right;letter-spacing:0.0px">66000</div>
<div class="a" style="left:663px;top:72px;width:12px;height:367px;background:#f9faf4"></div>
<div class="a" style="left:663px;top:85px;width:12px;height:253px;background:linear-gradient(90deg,#c6d2fb 0,#c4d0fa 60%,#c8c4f2 100%);border-right:1px solid #eef0ff;border-bottom:1px solid #a8b0d8"></div>
<div class="a" style="left:663px;top:84px;width:11px;height:1px;background:#eef4ff"></div>
<div class="a" style="left:665px;top:208px;width:7px;height:1px;background:#e4ecff"></div>
<div class="a" style="left:665px;top:210px;width:7px;height:1px;background:#e4ecff"></div>
<div class="a" style="left:665px;top:212px;width:7px;height:1px;background:#e4ecff"></div>
<div class="a" style="left:665px;top:214px;width:7px;height:1px;background:#e4ecff"></div>
<div class="a" style="left:663px;top:72px;width:12px;height:12px;background:linear-gradient(135deg,#d4e0fc,#c4d0f8);border-radius:1px"></div>
<div class="a" style="left:664px;top:427px;width:10px;height:12px;background:linear-gradient(135deg,#d0dcfc,#bcc8f4);border-bottom:1px solid #a0a8d0;border-radius:1px"></div>
<svg class="a" style="left:663px;top:72px" width="12" height="12"><path d="M2.8 7.8 L5.8 4.8 L8.8 7.8" fill="none" stroke="#3a4a88" stroke-width="1.7"/></svg>
<svg class="a" style="left:664px;top:427px" width="10" height="12"><path d="M2 4.8 L5 7.8 L8 4.8" fill="none" stroke="#3a4a88" stroke-width="1.7"/></svg>
<div class="a" style="left:12px;top:439px;width:651px;height:13px;background:#f9faf4"></div>
<div class="a" style="left:12px;top:440px;width:651px;height:1px;background:#e4f6fc"></div>
<div class="a" style="left:25px;top:441px;width:366px;height:11px;background:linear-gradient(#c2ccf6 0,#c4cefa 70%,#c6ccf6 100%);border-bottom:1px solid #e8f0ff"></div>
<div class="a" style="left:205px;top:443px;width:1px;height:6px;background:#e8eeff"></div>
<div class="a" style="left:207px;top:443px;width:1px;height:6px;background:#e8eeff"></div>
<div class="a" style="left:209px;top:443px;width:1px;height:6px;background:#e8eeff"></div>
<div class="a" style="left:211px;top:443px;width:1px;height:6px;background:#e8eeff"></div>
<div class="a" style="left:12px;top:441px;width:12px;height:11px;background:linear-gradient(135deg,#d4e0fc,#c4d0f8);border-radius:1px"></div>
<div class="a" style="left:650px;top:441px;width:12px;height:11px;background:linear-gradient(135deg,#d0dcfc,#c0ccf4);border-radius:1px"></div>
<svg class="a" style="left:12px;top:441px" width="12" height="11"><path d="M7 2.5 L4 5.5 L7 8.5" fill="none" stroke="#3a4a88" stroke-width="1.7"/></svg>
<svg class="a" style="left:650px;top:441px" width="12" height="11"><path d="M4.5 2.5 L7.5 5.5 L4.5 8.5" fill="none" stroke="#3a4a88" stroke-width="1.7"/></svg>
<div class="a" style="left:8px;top:454px;width:670px;height:2px;background:#e2eedc"></div>
<div class="a" style="left:12px;top:460px;width:10px;height:10px;border:1px solid #5c6474;background:#eef2f4"></div>
<svg class="a" style="left:12px;top:460px" width="10" height="10"><path d="M2.6 5.2 L4.3 6.7 L7.6 3.6" fill="none" stroke="#457a22" stroke-width="1.5"/></svg>
<div class="a" style="left:27px;top:460.2px;font-size:8.8px;letter-spacing:-0.2px;line-height:10px">Treat first row as header information</div>
<div class="a" style="left:680px;top:485px;width:2px;height:2px;background:#c0c8b8"></div>
<div class="a" style="left:677px;top:488px;width:2px;height:2px;background:#c0c8b8"></div>
<div class="a" style="left:680px;top:488px;width:2px;height:2px;background:#c0c8b8"></div>
<div class="a" style="left:674px;top:491px;width:2px;height:2px;background:#c0c8b8"></div>
<div class="a" style="left:677px;top:491px;width:2px;height:2px;background:#c0c8b8"></div>
<div class="a" style="left:680px;top:491px;width:2px;height:2px;background:#c0c8b8"></div>
</div></body></html>
